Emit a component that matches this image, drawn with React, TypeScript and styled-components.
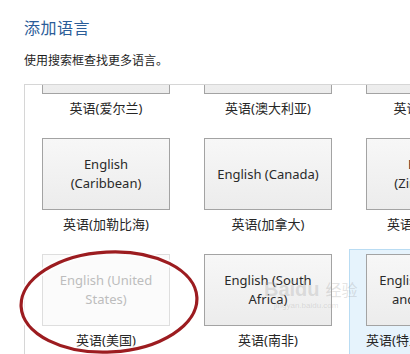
import React, { useLayoutEffect, useRef } from "react";
import styled, { createGlobalStyle } from "styled-components";

const GlobalStyle = createGlobalStyle`
  html, body {
    margin: 0;
    padding: 0;
    background: #ffffff;
    overflow: hidden;
  }
  body {
    font-family: "Noto Sans", "Noto Sans CJK SC", sans-serif;
    color: #222;
  }
`;

type Lang = {
  en: string;
  zh: string;
  disabled?: boolean;
  hover?: boolean;
};

const langs: Lang[] = [
  { en: "English\n(Ireland)", zh: "英语(爱尔兰)" },
  { en: "English (Australia)", zh: "英语(澳大利亚)" },
  { en: "English (Belize)", zh: "英语(伯利兹)" },
  { en: "English\n(Caribbean)", zh: "英语(加勒比海)" },
  { en: "English (Canada)", zh: "英语(加拿大)" },
  { en: "English\n(Zimbabwe)", zh: "英语(津巴布韦)" },
  { en: "English (United\nStates)", zh: "英语(美国)", disabled: true },
  { en: "English (South\nAfrica)", zh: "英语(南非)" },
  { en: "English (Trinidad\nand Tobago)", zh: "英语(特立尼达和多巴哥)", hover: true },
];

const Page = styled.div`
  position: relative;
  width: 410px;
  height: 354px;
  padding-left: 24px;
  box-sizing: border-box;
  overflow: hidden;
`;

const Title = styled.h1`
  margin: 0;
  padding-top: 18px;
  font-size: 16px;
  line-height: 20px;
  font-weight: 400;
  color: #2b5d98;
  letter-spacing: 0.5px;
`;

const Subtitle = styled.p`
  margin: 15px 0 0;
  font-size: 12px;
  line-height: 16px;
  color: #1e1e1e;
`;

const Panel = styled.div`
  margin-top: 15px;
  width: 520px;
  height: 270px;
  border-top: 1px solid #d6d6d6;
  border-left: 1px solid #d6d6d6;
  overflow: hidden;
`;

const Grid = styled.div`
  display: grid;
  grid-template-columns: repeat(3, 162px);
  grid-auto-rows: 116px;
`;

const Cell = styled.div<{ $hover?: boolean }>`
  box-sizing: border-box;
  padding: 4px 0 0 16px;
  border: 1px solid ${(p) => (p.$hover ? "#b9dcf3" : "transparent")};
  background: ${(p) => (p.$hover ? "#e6f3fc" : "transparent")};
`;

const Tile = styled.div<{ $disabled?: boolean }>`
  box-sizing: border-box;
  width: 128px;
  height: 72px;
  display: flex;
  align-items: center;
  justify-content: center;
  text-align: center;
  white-space: pre-line;
  font-size: 13px;
  line-height: 19px;
  color: ${(p) => (p.$disabled ? "#bdbdbd" : "#2a2a2a")};
  border: 1px solid ${(p) => (p.$disabled ? "#dedede" : "#a3a3a3")};
  background: ${(p) =>
    p.$disabled
      ? "#fbfbfb"
      : "linear-gradient(to bottom, #f7f7f7 0%, #ececec 100%)"};
`;

const Label = styled.div`
  width: 128px;
  margin-top: 6px;
  text-align: center;
  font-size: 13px;
  line-height: 16px;
  color: #262626;
  white-space: nowrap;
`;

const Overlay = styled.svg`
  position: absolute;
  left: 0;
  top: 0;
  pointer-events: none;
`;

const Watermark = styled.div`
  position: absolute;
  left: 264px;
  top: 279px;
  color: rgba(160, 160, 160, 0.3);
  font-family: "Liberation Sans", "Noto Sans CJK SC", sans-serif;
  pointer-events: none;
`;

const MarkBig = styled.div`
  display: flex;
  align-items: baseline;
  gap: 6px;
  font-size: 20px;
  font-weight: 700;
  line-height: 20px;
`;

const MarkCn = styled.span`
  font-size: 16px;
  font-weight: 400;
`;

const MarkSmall = styled.div`
  font-size: 8px;
  line-height: 10px;
  padding-left: 10px;
`;

export default function App() {
  const panelRef = useRef<HTMLDivElement>(null);

  useLayoutEffect(() => {
    if (panelRef.current) panelRef.current.scrollTop = 68;
  }, []);

  return (
    <>
      <GlobalStyle />
      <Page>
        <Title>添加语言</Title>
        <Subtitle>使用搜索框查找更多语言。</Subtitle>
        <Panel ref={panelRef}>
          <Grid>
            {langs.map((l) => (
              <Cell key={l.zh} $hover={l.hover}>
                <Tile $disabled={l.disabled}>{l.en}</Tile>
                <Label>{l.zh}</Label>
              </Cell>
            ))}
          </Grid>
        </Panel>
        <Watermark>
          <MarkBig>
            Baidu<MarkCn>经验</MarkCn>
          </MarkBig>
          <MarkSmall>jingyan.baidu.com</MarkSmall>
        </Watermark>
        <Overlay width="410" height="354" viewBox="0 0 410 354">
          <ellipse
            cx="109"
            cy="302"
            rx="88"
            ry="50"
            fill="none"
            stroke="#ffffff"
            strokeWidth="7"
            opacity="0.8"
            transform="rotate(-3 109 302)"
          />
          <ellipse
            cx="109"
            cy="302"
            rx="88"
            ry="50"
            fill="none"
            stroke="#9c1c20"
            strokeWidth="3.2"
            transform="rotate(-3 109 302)"
          />
        </Overlay>
      </Page>
    </>
  );
}
